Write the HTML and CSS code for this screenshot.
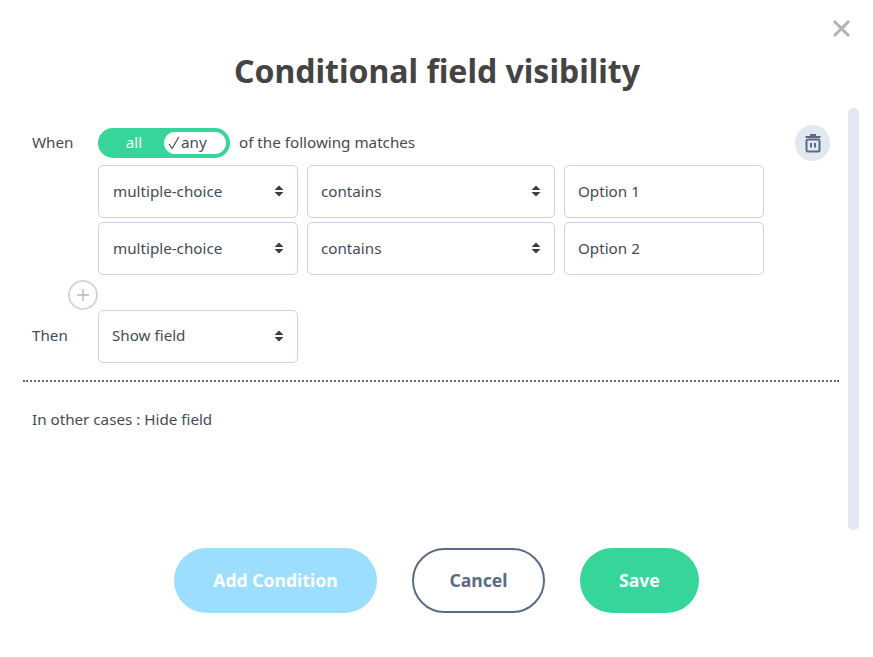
FILE: index.html
```html
<!DOCTYPE html>
<html>
<head>
  <title>Conditional field visibility</title>
  <meta name="viewport" content="width=device-width, initial-scale=1.0">
  <link rel="stylesheet" href="styles.css">
</head>
<body>
  <div class="modal">
    <button class="close" aria-label="Close">
      <svg width="19" height="19" viewBox="0 0 19 19"><path d="M2 2 L17 17 M17 2 L2 17" stroke="#b3b3b3" stroke-width="3" fill="none"/></svg>
    </button>
    <h2>Conditional field visibility</h2>
    <div class="scrollbar"></div>

    <div class="body">
      <button class="trash" aria-label="Delete">
        <svg width="18" height="20" viewBox="0 0 18 20" fill="none" stroke="#5b6b85" stroke-width="2">
          <path d="M1.5 4 H16.5 M6 2 H12" />
          <rect x="2.5" y="6.5" width="13" height="12" rx="1.5"/>
          <path d="M7 10 V14.5 M11 10 V14.5"/>
        </svg>
      </button>

      <div class="rule">
        <span class="label">When</span>
        <div class="toggle">
          <span class="toggle-all">all</span>
          <span class="toggle-any">
            <svg class="check" width="12" height="14" viewBox="0 0 12 14"><path d="M1 8 L4.2 12.5 L10.8 1" stroke="#444b55" stroke-width="1.2" fill="none"/></svg>
            any
          </span>
        </div>
        <span class="suffix">of the following matches</span>
      </div>

      <div class="row">
        <div class="select field"><span>multiple-choice</span><svg class="arrows" width="10" height="12" viewBox="0 0 10 12"><path d="M5 0.5 L9.5 5 H0.5 Z M5 11.5 L0.5 7 H9.5 Z" fill="#3c3c3c"/></svg></div>
        <div class="select operator"><span>contains</span><svg class="arrows" width="10" height="12" viewBox="0 0 10 12"><path d="M5 0.5 L9.5 5 H0.5 Z M5 11.5 L0.5 7 H9.5 Z" fill="#3c3c3c"/></svg></div>
        <input class="value" type="text" value="Option 1">
      </div>
      <div class="row">
        <div class="select field"><span>multiple-choice</span><svg class="arrows" width="10" height="12" viewBox="0 0 10 12"><path d="M5 0.5 L9.5 5 H0.5 Z M5 11.5 L0.5 7 H9.5 Z" fill="#3c3c3c"/></svg></div>
        <div class="select operator"><span>contains</span><svg class="arrows" width="10" height="12" viewBox="0 0 10 12"><path d="M5 0.5 L9.5 5 H0.5 Z M5 11.5 L0.5 7 H9.5 Z" fill="#3c3c3c"/></svg></div>
        <input class="value" type="text" value="Option 2">
      </div>

      <button class="add" aria-label="Add">
        <svg width="14" height="14" viewBox="0 0 14 14"><path d="M7 1 V13 M1 7 H13" stroke="#b5b9bf" stroke-width="1.4" fill="none"/></svg>
      </button>

      <div class="then">
        <span class="label">Then</span>
        <div class="select field"><span>Show field</span><svg class="arrows" width="10" height="12" viewBox="0 0 10 12"><path d="M5 0.5 L9.5 5 H0.5 Z M5 11.5 L0.5 7 H9.5 Z" fill="#3c3c3c"/></svg></div>
      </div>
    </div>

    <div class="divider"></div>
    <p class="other">In other cases : Hide field</p>

    <div class="actions">
      <button class="btn btn-add">Add Condition</button>
      <button class="btn btn-cancel">Cancel</button>
      <button class="btn btn-save">Save</button>
    </div>
  </div>
</body>
</html>
```

FILE: styles.css
```css
* {
  box-sizing: border-box;
}
body {
  margin: 0;
  background: white;
  font-family: 'Noto Sans', 'Open Sans', Arial, sans-serif;
  font-size: 15.2px;
  color: #444b55;
}
.modal {
  position: relative;
  width: 873px;
  height: 657px;
  padding: 48px 34px 0 23px;
  overflow: hidden;
}
button {
  font-family: inherit;
  cursor: pointer;
}
.close {
  position: absolute;
  top: 19px;
  left: 832px;
  padding: 0;
  border: none;
  background: none;
  line-height: 0;
}
h2 {
  margin: 0;
  padding-left: 12px;
  height: 50px;
  line-height: 46px;
  text-align: center;
  font-family: 'Noto Sans', Arial, sans-serif;
  font-size: 32px;
  font-weight: 700;
  color: #444;
}
.scrollbar {
  position: absolute;
  top: 108px;
  left: 848px;
  width: 11px;
  height: 422px;
  border-radius: 5px;
  background: #e4e7f1;
}
.body {
  position: relative;
  padding-top: 30px;
}
.trash {
  position: absolute;
  top: 27px;
  left: 772px;
  width: 35px;
  height: 36px;
  padding: 0;
  border: none;
  border-radius: 50%;
  background: #e2e8f0;
  display: flex;
  align-items: center;
  justify-content: center;
}
.rule {
  display: flex;
  align-items: center;
  height: 30px;
  margin-bottom: 7px;
  padding-left: 9px;
}
.rule > span {
  padding-bottom: 2px;
}
.label {
  width: 66px;
}
.toggle {
  width: 132px;
  height: 30px;
  padding: 4px;
  display: flex;
  align-items: center;
  border-radius: 15px;
  background: #36d69b;
}
.toggle-all {
  width: 62px;
  padding: 0 0 2px 2px;
  text-align: center;
  color: white;
}
.toggle-any {
  flex: 1;
  height: 22px;
  padding: 0 0 2px 4px;
  display: flex;
  align-items: center;
  gap: 1px;
  border-radius: 11px;
  background: white;
  color: #444b55;
}
.check {
  margin-top: 2px;
}
.suffix {
  margin-left: 9px;
}
.row {
  display: flex;
  gap: 9px;
  margin-bottom: 4px;
  padding-left: 75px;
}
.row:last-of-type {
  margin-bottom: 0;
}
.select {
  height: 53px;
  padding: 0 13px 2px 13px;
  display: flex;
  align-items: center;
  justify-content: space-between;
  border: 1px solid #cad4e0;
  border-radius: 5px;
  background: white;
}
.row .field {
  padding-left: 14px;
}
.field {
  width: 200px;
}
.operator {
  width: 248px;
}
.value {
  width: 200px;
  height: 53px;
  padding: 0 13px 2px;
  border: 1px solid #cad4e0;
  border-radius: 5px;
  font-family: inherit;
  font-size: 15.2px;
  color: #444b55;
  outline: none;
}
.add {
  display: flex;
  align-items: center;
  justify-content: center;
  width: 30px;
  height: 30px;
  margin: 5px 0 0 45px;
  padding: 0;
  border: 2px solid #d2d6dc;
  border-radius: 50%;
  background: white;
}
.then {
  display: flex;
  align-items: center;
  padding-left: 9px;
}
.then .label {
  padding-bottom: 4px;
}
.then .select {
  padding-bottom: 4px;
}
.then .arrows {
  margin-top: 2px;
}
.divider {
  margin-top: 17px;
  border-top: 2px dotted #5b6b85;
  width: 816px;
}
.other {
  margin: 27px 0 0 9px;
  line-height: 20px;
}
.actions {
  position: absolute;
  top: 548px;
  left: 174px;
  display: flex;
  gap: 35px;
}
.btn {
  height: 65px;
  padding: 0 0 2px;
  border-radius: 33px;
  border: none;
  font-size: 17.6px;
  font-weight: 700;
}
.btn-add {
  width: 203px;
  background: #9bdefe;
  color: white;
}
.btn-cancel {
  width: 133px;
  border: 2px solid #5b6b85;
  background: white;
  color: #5b6b85;
}
.btn-save {
  width: 119px;
  background: #36d69b;
  color: white;
}
```
